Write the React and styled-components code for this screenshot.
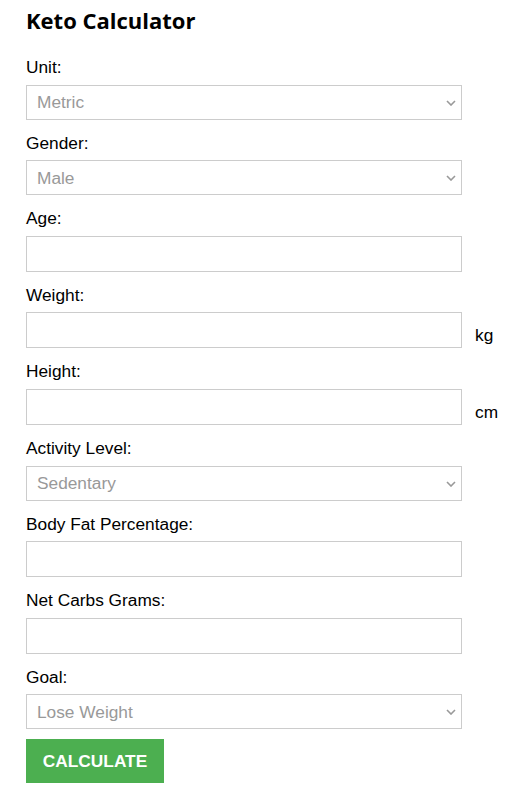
import React from 'react';
import styled, { createGlobalStyle } from 'styled-components';

const GlobalStyle = createGlobalStyle`
  body {
    margin: 0;
    background: #fff;
  }
`;

const Wrapper = styled.div`
  padding: 5px 26px 0;
  font-family: "Liberation Sans", Arial, sans-serif;
  color: #000;
`;

const Title = styled.h2`
  margin: 0 0 22px;
  font-family: "Open Sans", "Noto Sans", sans-serif;
  font-weight: 700;
  font-size: 22px;
  line-height: 30px;
  color: #000;
`;

const Form = styled.form`
  display: flex;
  flex-direction: column;
`;

const Field = styled.div`
  display: flex;
  flex-direction: column;
  margin-bottom: ${(p) => (p.$last ? '10px' : '13px')};
`;

const Label = styled.label`
  font-size: 17.3px;
  line-height: 20px;
  margin-bottom: 7.6px;
`;

const Row = styled.div`
  display: flex;
  align-items: flex-end;
  gap: 13px;
`;

const SelectWrap = styled.div`
  position: relative;
  width: 436px;
`;

const Select = styled.select`
  appearance: none;
  display: block;
  width: 100%;
  height: 35px;
  box-sizing: border-box;
  padding: 0 24px 0 10px;
  border: 1px solid #ccc;
  border-radius: 0;
  background: #fff;
  color: #999;
  font-family: "Liberation Sans", Arial, sans-serif;
  font-size: 17.3px;
  outline: none;
`;

const Chevron = styled.svg`
  position: absolute;
  right: 6px;
  top: 15px;
  width: 10px;
  height: 6px;
  pointer-events: none;
`;

const Input = styled.input`
  display: block;
  flex-shrink: 0;
  width: 436px;
  height: 36px;
  box-sizing: border-box;
  padding: 0 10px;
  border: 1px solid #ccc;
  border-radius: 0;
  background: #fff;
  font-family: "Liberation Sans", Arial, sans-serif;
  font-size: 17.3px;
  outline: none;
`;

const Unit = styled.span`
  font-size: 17.3px;
  line-height: 20px;
  margin-bottom: 3px;
  white-space: nowrap;
`;

const Button = styled.button`
  align-self: flex-start;
  width: 138px;
  height: 44px;
  padding: 0;
  border: none;
  border-radius: 0;
  background: #4caf50;
  color: #fff;
  font-family: "Liberation Sans", Arial, sans-serif;
  font-weight: 700;
  font-size: 17.3px;
  text-transform: uppercase;
  cursor: pointer;
`;

const SelectField = ({ label, options, last }) => (
  <Field $last={last}>
    <Label>{label}</Label>
    <SelectWrap>
      <Select defaultValue={options[0]}>
        {options.map((o) => (
          <option key={o}>{o}</option>
        ))}
      </Select>
      <Chevron viewBox="0 0 10 6">
        <polyline points="1,1 5,5 9,1" fill="none" stroke="#999" strokeWidth="1.6" />
      </Chevron>
    </SelectWrap>
  </Field>
);

const InputField = ({ label, unit }) => (
  <Field>
    <Label>{label}</Label>
    <Row>
      <Input type="text" />
      {unit && <Unit>{unit}</Unit>}
    </Row>
  </Field>
);

const App = () => (
  <Wrapper>
    <GlobalStyle />
    <Title>Keto Calculator</Title>
    <Form onSubmit={(e) => e.preventDefault()}>
      <SelectField label="Unit:" options={['Metric', 'Imperial']} />
      <SelectField label="Gender:" options={['Male', 'Female']} />
      <InputField label="Age:" />
      <InputField label="Weight:" unit="kg" />
      <InputField label="Height:" unit="cm" />
      <SelectField
        label="Activity Level:"
        options={['Sedentary', 'Lightly Active', 'Moderately Active', 'Very Active']}
      />
      <InputField label="Body Fat Percentage:" />
      <InputField label="Net Carbs Grams:" />
      <SelectField label="Goal:" options={['Lose Weight', 'Maintain Weight', 'Gain Weight']} last />
      <Button type="submit">Calculate</Button>
    </Form>
  </Wrapper>
);

export default App;
